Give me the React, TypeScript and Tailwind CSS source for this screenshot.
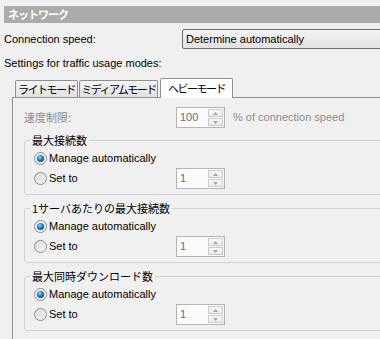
import React from "react";

const jp = "font-['Noto_Sans_CJK_JP',sans-serif]";

function Radio({ checked }: { checked?: boolean }) {
  return (
    <svg width="13" height="13" viewBox="0 0 13 13" className="shrink-0">
      <defs>
        <linearGradient id="rOff" x1="0" y1="0" x2="1" y2="1">
          <stop offset="0" stopColor="#d6d6d6" />
          <stop offset="1" stopColor="#fbfbfb" />
        </linearGradient>
        <radialGradient id="rDot" cx="0.4" cy="0.35" r="0.7">
          <stop offset="0" stopColor="#8fe0fb" />
          <stop offset="0.45" stopColor="#2a8ccf" />
          <stop offset="1" stopColor="#0b3f78" />
        </radialGradient>
      </defs>
      <circle cx="6.5" cy="6.5" r="6" fill={checked ? "#f4f4f4" : "url(#rOff)"} stroke="#8b8b8b" strokeWidth="1" />
      <circle cx="6.5" cy="6.5" r="4.6" fill="none" stroke="#e6e6e6" strokeWidth="0.8" />
      {checked ? <circle cx="6.5" cy="6.5" r="3.6" fill="url(#rDot)" /> : null}
    </svg>
  );
}

function Spin({ value }: { value: string }) {
  return (
    <div className="flex h-[21px] w-[49px] shrink-0 border border-[#b4b4b4] bg-[#fbfbfb]">
      <div className="flex flex-1 items-center pl-[3px] text-[11px] text-[#6d6d6d]">{value}</div>
      <div className="flex w-[16px] flex-col gap-px py-px pr-px">
        <div className="flex flex-1 items-center justify-center border border-[#cbcbcb] bg-linear-to-b from-[#f8f8f8] to-[#ebebeb]">
          <svg width="5" height="3" viewBox="0 0 5 3"><polygon points="0,3 2.5,0 5,3" fill="#a6a6a6" /></svg>
        </div>
        <div className="flex flex-1 items-center justify-center border border-[#cbcbcb] bg-linear-to-b from-[#f8f8f8] to-[#ebebeb]">
          <svg width="5" height="3" viewBox="0 0 5 3"><polygon points="0,0 2.5,3 5,0" fill="#a6a6a6" /></svg>
        </div>
      </div>
    </div>
  );
}

function Group({ title }: { title: string }) {
  return (
    <div className="relative h-[55px] w-[400px] shrink-0 rounded-[3px] border border-[#d0d4d8]">
      <span className={`absolute left-[5px] top-[-8px] bg-[#f0f0f0] px-[2px] text-[11px] leading-[14px] text-black ${jp}`}>{title}</span>
      <div className="mt-[7px] flex h-[20px] items-center gap-[2px] pl-[9px]">
        <Radio checked />
        <span>Manage automatically</span>
      </div>
      <div className="flex h-[21px] items-center">
        <div className="flex w-[151px] shrink-0 items-center gap-[2px] pl-[9px]">
          <Radio />
          <span>Set to</span>
        </div>
        <Spin value="1" />
      </div>
    </div>
  );
}

export default function App() {
  return (
    <div className="flex h-[339px] w-[380px] flex-col overflow-hidden bg-[#f0f0f0] pl-[4px] pt-[6px] font-['Liberation_Sans','Noto_Sans_CJK_JP',sans-serif] text-[11px] text-black">
      <div className={`flex h-[17px] shrink-0 items-center bg-[#ababab] pl-[4px] text-[11px] font-bold tracking-[-1px] text-white ${jp}`}>ネットワーク</div>

      <div className="mt-[6px] flex h-[20px] w-[420px] shrink-0 items-center">
        <span className="w-[178px] shrink-0">Connection speed:</span>
        <div className="flex h-[20px] w-[220px] shrink-0 items-center rounded-[2px] border border-[#707070] bg-linear-to-b from-[#f4f4f4] to-[#e2e2e2] pl-[3px]">
          Determine automatically
        </div>
      </div>

      <div className="mt-[7px] flex h-[14px] shrink-0 items-center">Settings for traffic usage modes:</div>

      <div className={`ml-[11px] mt-[8px] flex shrink-0 items-end text-[11px] tracking-[-1.5px] ${jp}`}>
        <div className="flex h-[17px] w-[63px] items-center justify-center rounded-t-[2px] border border-b-0 border-[#8e8f8f] bg-linear-to-b from-[#f4f4f4] to-[#e1e1e1]">ライトモード</div>
        <div className="ml-px flex h-[17px] w-[79px] items-center justify-center rounded-t-[2px] border border-b-0 border-[#8e8f8f] bg-linear-to-b from-[#f4f4f4] to-[#e1e1e1]">ミディアムモード</div>
        <div className="relative z-10 mb-[-1px] ml-[2px] flex h-[20px] w-[73px] items-center justify-center rounded-t-[2px] border border-b-0 border-[#8e8f8f] bg-white pb-px">ヘビーモード</div>
      </div>

      <div className="ml-[8px] flex w-[440px] flex-1 flex-col gap-[13px] border-l border-t border-[#8e8f8f] bg-[#f0f0f0] pl-[11px]">
        <div className="mb-[-1px] mt-[9px] flex h-[21px] items-center text-[#8d8d8d]">
          <span className={`w-[152px] shrink-0 ${jp}`}>速度制限:</span>
          <Spin value="100" />
          <span className="ml-[8px]">% of connection speed</span>
        </div>
        <Group title="最大接続数" />
        <Group title="1サーバあたりの最大接続数" />
        <Group title="最大同時ダウンロード数" />
      </div>
    </div>
  );
}
